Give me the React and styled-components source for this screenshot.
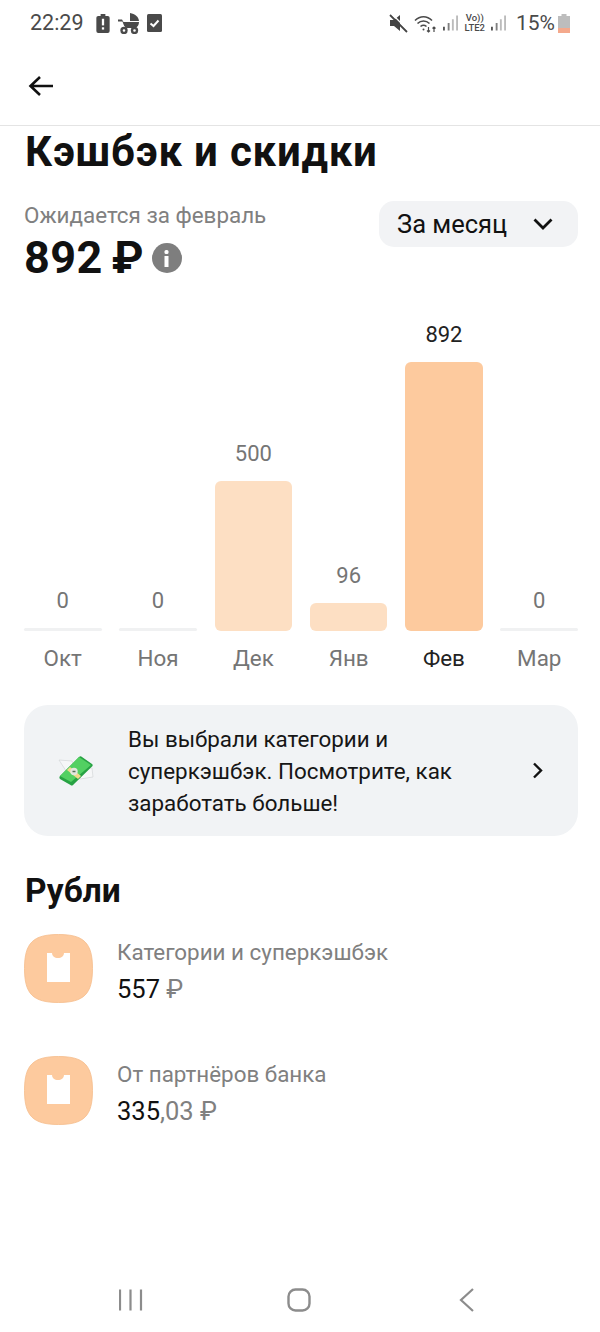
import styled, { createGlobalStyle } from "styled-components";

const Global = createGlobalStyle`
html, body { margin:0; padding:0; background:#fff; }
body { font-family:Roboto, "Noto Sans", sans-serif; color:#111; }
`;

const Page = styled.div`
width:600px;
height:1332px;
display:flex;
flex-direction:column;
overflow:hidden;
background:#fff;
`;

const StatusBar = styled.div`
height:46px;
padding:0 0 0 30px;
display:flex;
align-items:center;
color:#4a4a4a;
`;
const Time = styled.span`
font-size:21.5px;
line-height:46px;
margin-right:4px;
`;
const StatusLeft = styled.div`
display:flex;
align-items:center;
gap:8px;
`;
const StatusRight = styled.div`
margin-left:auto;
margin-right:30px;
display:flex;
align-items:center;
gap:6px;
`;
const Percent = styled.span`
font-size:21px;
margin-left:4px;
margin-right:-3px;
`;
const Lte = styled.span`
font-size:9.5px;
line-height:10px;
font-weight:500;
text-align:center;
`;

const Header = styled.div`
height:79px;
padding:0 0 0 28px;
display:flex;
align-items:center;
border-bottom:1px solid #e4e4e4;
`;

const Content = styled.div`
padding:0 22px 0 24px;
display:flex;
flex-direction:column;
`;
const Title = styled.h1`
margin:0 0 0 1px;
font-size:42px;
line-height:52px;
font-weight:700;
letter-spacing:.8px;
color:#111;
`;
const SummaryRow = styled.div`
margin-top:23px;
display:flex;
justify-content:space-between;
align-items:flex-start;
`;
const Expected = styled.div`
font-size:22.4px;
line-height:26px;
margin-top:1px;
color:#808080;
`;
const Total = styled.div`
margin-top:5px;
display:flex;
align-items:center;
gap:9px;
font-size:45px;
line-height:50px;
font-weight:700;
letter-spacing:.4px;
color:#111;
`;
const InfoDot = styled.span`
width:30px;
height:30px;
margin-left:-1px;
border-radius:50%;
background:#7e7e7e;
display:flex;
align-items:center;
justify-content:center;
`;
const Select = styled.div`
width:199px;
height:46px;
box-sizing:border-box;
padding:0 25px 0 18px;
border-radius:15px;
background:#f2f3f5;
display:flex;
align-items:center;
justify-content:space-between;
font-size:25.5px;
`;

const Chart = styled.div`
margin-top:27px;
height:321px;
display:grid;
grid-template-columns:repeat(6, 77.5px);
justify-content:space-between;
align-items:end;
`;
const MonthRow = styled.div`
display:grid;
grid-template-columns:repeat(6, 77.5px);
justify-content:space-between;
`;
const Column = styled.div`
display:flex;
flex-direction:column;
align-items:center;
`;
const Value = styled.div`
font-size:22px;
line-height:26px;
margin-bottom:14px;
color:${p => (p.$active ? "#222" : "#757575")};
`;
const Bar = styled.div`
width:100%;
height:${p => p.$h}px;
background:${p => p.$bg};
border-radius:${p => (p.$zero ? "2px" : "6px")};
`;
const Month = styled.div`
margin-top:14px;
font-size:22.4px;
line-height:26px;
color:${p => (p.$active ? "#222" : "#757575")};
`;

const Banner = styled.div`
margin-top:34px;
height:131px;
border-radius:24px;
background:#f1f3f5;
display:flex;
align-items:center;
padding:0 35px 0 34px;
`;
const BannerText = styled.div`
margin-left:34px;
width:365px;
font-size:22.4px;
line-height:32px;
color:#161616;
`;
const BannerArrow = styled.div`
margin-left:auto;
display:flex;
`;

const SectionTitle = styled.h2`
margin:35px 0 0 1px;
font-size:33.5px;
line-height:40px;
font-weight:700;
color:#111;
`;
const Row = styled.div`
margin-top:${p => (p.$first ? "23px" : "53px")};
display:flex;
align-items:flex-start;
gap:24px;
`;
const RowText = styled.div`
padding-top:4px;
display:flex;
flex-direction:column;
`;
const RowLabel = styled.div`
font-size:22.4px;
line-height:28px;
color:#808080;
`;
const RowValue = styled.div`
margin-top:9px;
font-size:25.5px;
line-height:28px;
color:#111;
span { color:#808080; }
`;

const NavBar = styled.div`
margin-top:auto;
height:64px;
box-sizing:border-box;
padding:20px 125px 0 119px;
display:flex;
align-items:flex-start;
justify-content:space-between;
`;
const HomeButton = styled.svg`
margin-right:5px;
`;

const Battery = ({ children }) => (
  <svg width="14" height="19" viewBox="0 0 14 20">
    <path d="M4.500 0h5v2H12a2 2 0 0 1 2 2v14a2 2 0 0 1-2 2H2a2 2 0 0 1-2-2V4a2 2 0 0 1 2-2h2.500z" fill="#4a4a4a" />
    {children}
  </svg>
);

const Stroller = () => (
  <svg width="21" height="21" viewBox="0 0 21 21" fill="#4a4a4a">
    <path d="M12 0c5 1 8.500 3.500 9 8h-9z" />
    <path d="M0 6.500h4l1.500 2.500H21c0 3-1.500 5-3.500 6h-9C6.500 14 5.500 12 4.500 8.500H0z" />
    <circle cx="6" cy="17.500" r="2.500" fill="none" stroke="#4a4a4a" strokeWidth="2.400" />
    <circle cx="16.500" cy="17.500" r="2.500" fill="none" stroke="#4a4a4a" strokeWidth="2.400" />
  </svg>
);

const CheckBox = () => (
  <svg width="15" height="18" viewBox="0 0 15 18">
    <rect width="15" height="18" rx="1.500" fill="#4a4a4a" />
    <path d="M3.500 9.500l3 2.500 5-5.500" fill="none" stroke="#fff" strokeWidth="2" />
  </svg>
);

const Muted = () => (
  <svg width="19" height="19" viewBox="0 0 19 19">
    <path d="M1 6h4l6-5v16l-6-5H1z" fill="#444" />
    <path d="M1 1l17 17" stroke="#444" strokeWidth="1.800" />
    <path d="M3 0l16 16" stroke="#fff" strokeWidth="1.300" />
  </svg>
);

const Wifi = () => (
  <svg width="23" height="19" viewBox="0 0 23 19" fill="none" stroke="#4a4a4a" strokeWidth="1.600">
    <path d="M1 6.500C6 1.500 13 1.500 18 6.500" />
    <path d="M3.500 9.500c3.500-3.300 8.500-3.300 12 0" />
    <path d="M6.500 12.500c2-1.700 4-1.700 6 0" />
    <circle cx="9.500" cy="15.500" r="1" fill="#4a4a4a" stroke="none" />
    <path d="M14.500 13v5M13 16.500l1.500 1.500 1.500-1.500M20 18v-5M18.500 14.500l1.500-1.500 1.500 1.500" strokeWidth="1.200" />
  </svg>
);

const Signal = () => (
  <svg width="15" height="18" viewBox="0 0 16 18">
    <rect x="0" y="13" width="2" height="4" fill="#555" />
    <rect x="5" y="9" width="2" height="8" fill="#555" opacity=".75" />
    <rect x="9.500" y="5" width="2" height="12" fill="#bbb" />
    <rect x="14" y="1" width="2" height="16" fill="#bbb" />
  </svg>
);

const BatteryLow = () => (
  <svg width="12" height="19" viewBox="0 0 12 19">
    <path d="M3.500 0h5v2H12v17H0V2h3.500z" fill="#bdbdbd" />
    <rect y="14" width="12" height="5" fill="#f4a98c" />
  </svg>
);

const Arrow = () => (
  <svg width="26" height="22" viewBox="0 0 26 22" fill="none" stroke="#111" strokeWidth="2.600">
    <path d="M25 11H3M12 2l-9.500 9 9.500 9" />
  </svg>
);

const RubleLogo = () => (
  <svg width="69" height="69" viewBox="0 0 69 69">
    <path d="M34.500 .5C60 .5 68.500 9 68.500 34.500S60 68.500 34.500 68.500 .5 60 .5 34.500 9 .5 34.500 .5z" fill="#fdca9e" stroke="#f5bd8c" strokeWidth="0.800" />
    <path d="M23 19h5c.3 3.500 2.500 5 6 5s5.700-1.500 6-5h6v29H23z" fill="#fff" />
  </svg>
);

const MoneyIcon = () => (
  <svg width="36" height="30" viewBox="0 0 36 30">
    <path d="M1 4l13 1 3 8-7 5z" fill="#f6f7f8" stroke="#cfd2d4" strokeWidth=".6" />
    <path d="M22 13l12-1 1 9-13 2z" fill="#f6f7f8" stroke="#cfd2d4" strokeWidth=".6" />
    <path d="M2 20L21 1c1-.9 2-.9 3 0l10 7c.9.800.900 1.700 0 2.500L15 29c-.800.800-1.700.800-2.500 0L2 23c-.8-.8-.8-2 0-3z" fill="#27a243" />
    <path d="M2 20L21 1l12 8-20 17z" fill="#52d062" />
    <path d="M9 14l11 9 3-3-11-9z" fill="#f2d98c" />
    <circle cx="16" cy="15.500" r="3.700" fill="#e3e6de" />
    <path d="M14.500 15.500h3" stroke="#55705a" strokeWidth="1.500" />
  </svg>
);

const months = [
  { name: "Окт", value: 0, height: 3, bg: "#f0f1f2" },
  { name: "Ноя", value: 0, height: 3, bg: "#f0f1f2" },
  { name: "Дек", value: 500, height: 150, bg: "#fddfc3" },
  { name: "Янв", value: 96, height: 28, bg: "#fddfc3" },
  { name: "Фев", value: 892, height: 269, bg: "#fdca9e", active: true },
  { name: "Мар", value: 0, height: 3, bg: "#f0f1f2" },
];

export default function App() {
  return (
    <Page>
      <Global />
      <StatusBar>
        <StatusLeft>
          <Time>22:29</Time>
          <Battery>
            <rect x="5.800" y="5" width="2.400" height="7" fill="#fff" />
            <rect x="5.800" y="14" width="2.400" height="2.400" fill="#fff" />
          </Battery>
          <Stroller />
          <CheckBox />
        </StatusLeft>
        <StatusRight>
          <Muted />
          <Wifi />
          <Signal />
          <Lte>Vo))<br />LTE2</Lte>
          <Signal />
          <Percent>15%</Percent>
          <BatteryLow />
        </StatusRight>
      </StatusBar>
      <Header>
        <Arrow />
      </Header>
      <Content>
        <Title>Кэшбэк и скидки</Title>
        <SummaryRow>
          <div>
            <Expected>Ожидается за февраль</Expected>
            <Total>
              <span>892</span>
              <span>₽</span>
              <InfoDot>
                <svg width="7" height="17" viewBox="0 0 7 17" fill="#fff">
                  <rect x="1.500" y="0" width="4" height="4" rx="1.500" />
                  <rect x="1.500" y="6" width="4" height="11" />
                </svg>
              </InfoDot>
            </Total>
          </div>
          <Select>
            За месяц
            <svg width="20" height="12" viewBox="0 0 20 12" fill="none" stroke="#111" strokeWidth="2.800">
              <path d="M1.500 1.500L10 10l8.500-8.500" />
            </svg>
          </Select>
        </SummaryRow>
        <Chart>
          {months.map(m => (
            <Column key={m.name}>
              <Value $active={m.active}>{m.value}</Value>
              <Bar $h={m.height} $bg={m.bg} $zero={m.value === 0} />
            </Column>
          ))}
        </Chart>
        <MonthRow>
          {months.map(m => (
            <Column key={m.name}>
              <Month $active={m.active}>{m.name}</Month>
            </Column>
          ))}
        </MonthRow>
        <Banner>
          <MoneyIcon />
          <BannerText>Вы выбрали категории и суперкэшбэк. Посмотрите, как заработать больше!</BannerText>
          <BannerArrow>
            <svg width="11" height="17" viewBox="0 0 11 17" fill="none" stroke="#111" strokeWidth="2.400">
              <path d="M2 1.500l7 7-7 7" />
            </svg>
          </BannerArrow>
        </Banner>
        <SectionTitle>Рубли</SectionTitle>
        <Row $first>
          <RubleLogo />
          <RowText>
            <RowLabel>Категории и суперкэшбэк</RowLabel>
            <RowValue>557 <span>₽</span></RowValue>
          </RowText>
        </Row>
        <Row>
          <RubleLogo />
          <RowText>
            <RowLabel>От партнёров банка</RowLabel>
            <RowValue>335<span>,03 ₽</span></RowValue>
          </RowText>
        </Row>
      </Content>
      <NavBar>
        <svg width="24" height="24" viewBox="0 0 24 24" stroke="#8c8c8c" strokeWidth="2.200">
          <path d="M1 1.500v21M11.500 1.500v21M22 1.500v21" />
        </svg>
        <HomeButton width="24" height="24" viewBox="0 0 24 24" fill="none" stroke="#8c8c8c" strokeWidth="2.400">
          <rect x="1.500" y="1.500" width="21" height="21" rx="7" />
        </HomeButton>
        <svg width="16" height="24" viewBox="0 0 16 24" fill="none" stroke="#8c8c8c" strokeWidth="2.200">
          <path d="M14 1L2 12l12 11" />
        </svg>
      </NavBar>
    </Page>
  );
}
